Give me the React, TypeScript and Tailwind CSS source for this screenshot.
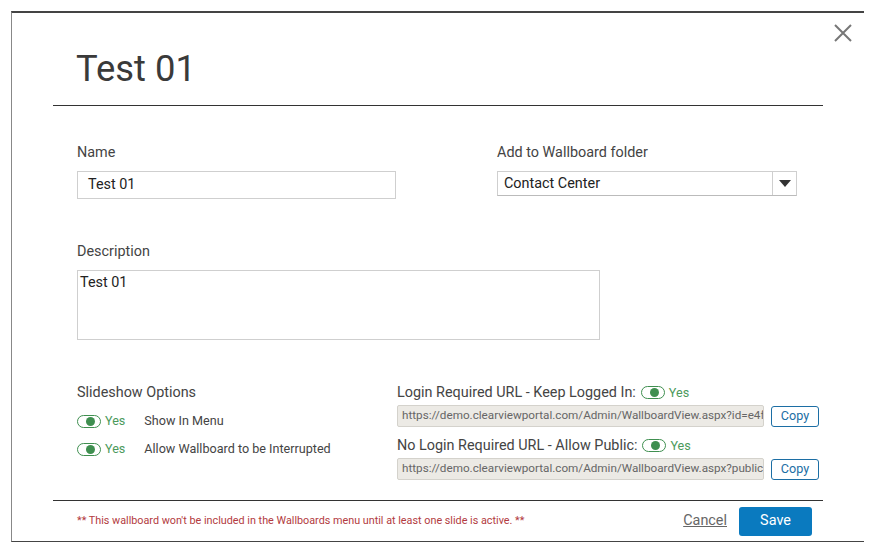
function Toggle() {
  return (
    <span className="flex items-center gap-[4px] text-[12.6px] text-[#4c9a5b]">
      <span className="flex h-[13px] w-[24px] items-center justify-end rounded-full border border-[#3f8f50] pr-[5px]">
        <span className="h-[9px] w-[9px] rounded-full bg-[#3f8f50]" />
      </span>
      Yes
    </span>
  );
}

function UrlRow({ url }: { url: string }) {
  return (
    <div className="flex items-center gap-[7px]">
      <div className="flex h-[22px] w-[367px] items-center overflow-hidden whitespace-nowrap rounded-[2px] border border-[#d4d2cc] bg-[#eceae5] px-[4px] text-[11.7px] text-[#666666]">
        {url}
      </div>
      <button className="h-[21px] w-[48px] rounded-[3px] border border-[#1c6ea4] text-[12.6px] text-[#1c6ea4]">
        Copy
      </button>
    </div>
  );
}

export default function App() {
  return (
    <div className="h-[554px] w-[876px] overflow-hidden bg-white pl-[11px] pt-[11px] font-['Roboto',sans-serif] text-[#444444]">
      <div className="relative h-[531px] w-[853px] border-b border-l border-t-2 border-b-[#444444] border-l-[#888888] border-t-[#444444]">
        <button className="absolute right-[11px] top-[10px] text-[#777777]" aria-label="Close">
          <svg width="20" height="20" viewBox="0 0 20 20" fill="none" stroke="currentColor" strokeWidth="2">
            <path d="M2 2 L18 18 M18 2 L2 18" />
          </svg>
        </button>

        <div className="mx-[41px] flex h-[93px] w-[770px] items-end border-b border-[#333333] pb-[18px] pl-[23px]">
          <h1 className="text-[36.4px] font-normal leading-none text-[#3a3a3a]">Test 01</h1>
        </div>

        <div className="ml-[65px] mt-[38px] flex">
          <div className="w-[420px]">
            <label className="block text-[14.4px] leading-[18px]">Name</label>
            <div className="mt-[9px] flex h-[28px] w-[319px] items-center border border-[#cfcfcf] px-[10px] text-[14.4px] text-[#222222]">
              Test 01
            </div>
          </div>
          <div>
            <label className="block text-[14.4px] leading-[18px]">Add to Wallboard folder</label>
            <div className="mt-[9px] flex h-[25px] w-[300px] items-center justify-between border border-[#cfcfcf] border-b-[#bbbbbb] pl-[6px] text-[14.4px] text-[#222222]">
              <span className="pt-[1px]">Contact Center</span>
              <span className="flex h-full w-[24px] items-center justify-center border-l border-[#cfcfcf]">
                <svg width="12" height="7" viewBox="0 0 12 7">
                  <path d="M0 0 H12 L6 7 Z" fill="#333333" />
                </svg>
              </span>
            </div>
          </div>
        </div>

        <div className="ml-[65px] mt-[44px]">
          <label className="block text-[14.4px] leading-[18px]">Description</label>
          <div className="mt-[9px] h-[70px] w-[523px] border border-[#cfcfcf] px-[2px] py-[1px] text-[14.4px] text-[#222222]">
            Test 01
          </div>
        </div>

        <div className="ml-[65px] mt-[43px] flex">
          <div className="w-[320px]">
            <div className="text-[14.4px] leading-[20px]">Slideshow Options</div>
            <div className="mt-[9px] flex h-[18px] items-center text-[12.6px]">
              <Toggle />
              <span className="ml-[19px]">Show In Menu</span>
            </div>
            <div className="mt-[10px] flex h-[18px] items-center text-[12.6px]">
              <Toggle />
              <span className="ml-[19px]">Allow Wallboard to be Interrupted</span>
            </div>
          </div>
          <div>
            <div className="flex h-[20px] items-center gap-[5px] text-[14.4px]">
              Login Required URL - Keep Logged In:
              <Toggle />
            </div>
            <div className="mt-[2px]">
              <UrlRow url="https://demo.clearviewportal.com/Admin/WallboardView.aspx?id=e4f" />
            </div>
            <div className="mt-[9px] flex h-[20px] items-center gap-[5px] text-[14.4px]">
              No Login Required URL - Allow Public:
              <Toggle />
            </div>
            <div className="mt-[2px]">
              <UrlRow url="https://demo.clearviewportal.com/Admin/WallboardView.aspx?public" />
            </div>
          </div>
        </div>

        <div className="absolute bottom-0 left-[41px] flex h-[41px] w-[770px] items-center border-t border-[#333333] pl-[24px] pr-[11px]">
          <p className="text-[10.8px] text-[#b23a40]">
            ** This wallboard won't be included in the Wallboards menu until at least one slide is active. **
          </p>
          <a className="ml-auto text-[14.4px] text-[#666666] underline">Cancel</a>
          <button className="ml-[12px] h-[29px] w-[73px] rounded-[3px] bg-[#0a7abf] text-[14.4px] text-white">
            Save
          </button>
        </div>
      </div>
    </div>
  );
}
